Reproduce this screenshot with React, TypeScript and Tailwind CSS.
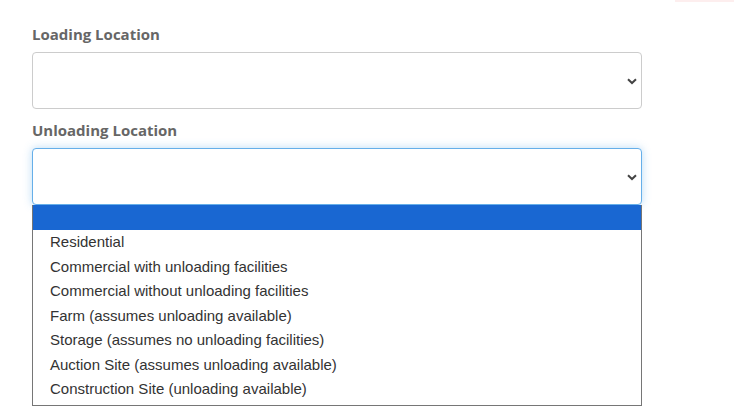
import React from "react";

const options = [
  "",
  "Residential",
  "Commercial with unloading facilities",
  "Commercial without unloading facilities",
  "Farm (assumes unloading available)",
  "Storage (assumes no unloading facilities)",
  "Auction Site (assumes unloading available)",
  "Construction Site (unloading available)",
];

function Chevron() {
  return (
    <svg width="10" height="7" viewBox="0 0 10 7" className="block">
      <path d="M1 1.2 L5 5 L9 1.2" fill="none" stroke="#444" strokeWidth="2" />
    </svg>
  );
}

function SelectBox({ focused }: { focused?: boolean }) {
  return (
    <div
      className={
        focused
          ? "h-[57px] w-[610px] rounded-[4px] border border-[#66afe9] bg-white shadow-[0_0_8px_rgba(102,175,233,0.45)] flex items-center justify-end pr-[4px] pt-[2px]"
          : "h-[57px] w-[610px] rounded-[4px] border border-[#cccccc] bg-white flex items-center justify-end pr-[4px] pt-[2px]"
      }
    >
      <Chevron />
    </div>
  );
}

export default function App() {
  return (
    <div className="relative w-[734px] h-[418px] bg-white overflow-hidden">
      <div className="absolute right-0 top-0 h-[2px] w-[59px] bg-[#fdeeee]" />
      <div className="pl-[32px] pt-[24px] flex flex-col" style={{ fontFamily: '"Open Sans", sans-serif' }}>
        <label className="text-[15px] leading-[20px] font-bold text-[#666666] mb-[8px]">Loading Location</label>
        <SelectBox />
        <label className="text-[15px] leading-[20px] font-bold text-[#666666] mt-[11px] mb-[8px]">Unloading Location</label>
        <div className="relative w-[610px]">
          <SelectBox focused />
          <div
            className="absolute left-0 top-full w-[610px] bg-white border border-[#767676] border-t-0 pb-[3px]"
            style={{ fontFamily: '"Liberation Sans", Arial, sans-serif' }}
          >
            {options.map((o, i) => (
              <div
                key={i}
                className={
                  i === 0
                    ? "h-[25px] bg-[#1967d2] text-white text-[15px] leading-[25px] pl-[17px]"
                    : "h-[24.5px] text-[#333333] text-[15px] leading-[24.5px] pl-[17px] whitespace-nowrap"
                }
              >
                {o}
              </div>
            ))}
          </div>
        </div>
      </div>
    </div>
  );
}
